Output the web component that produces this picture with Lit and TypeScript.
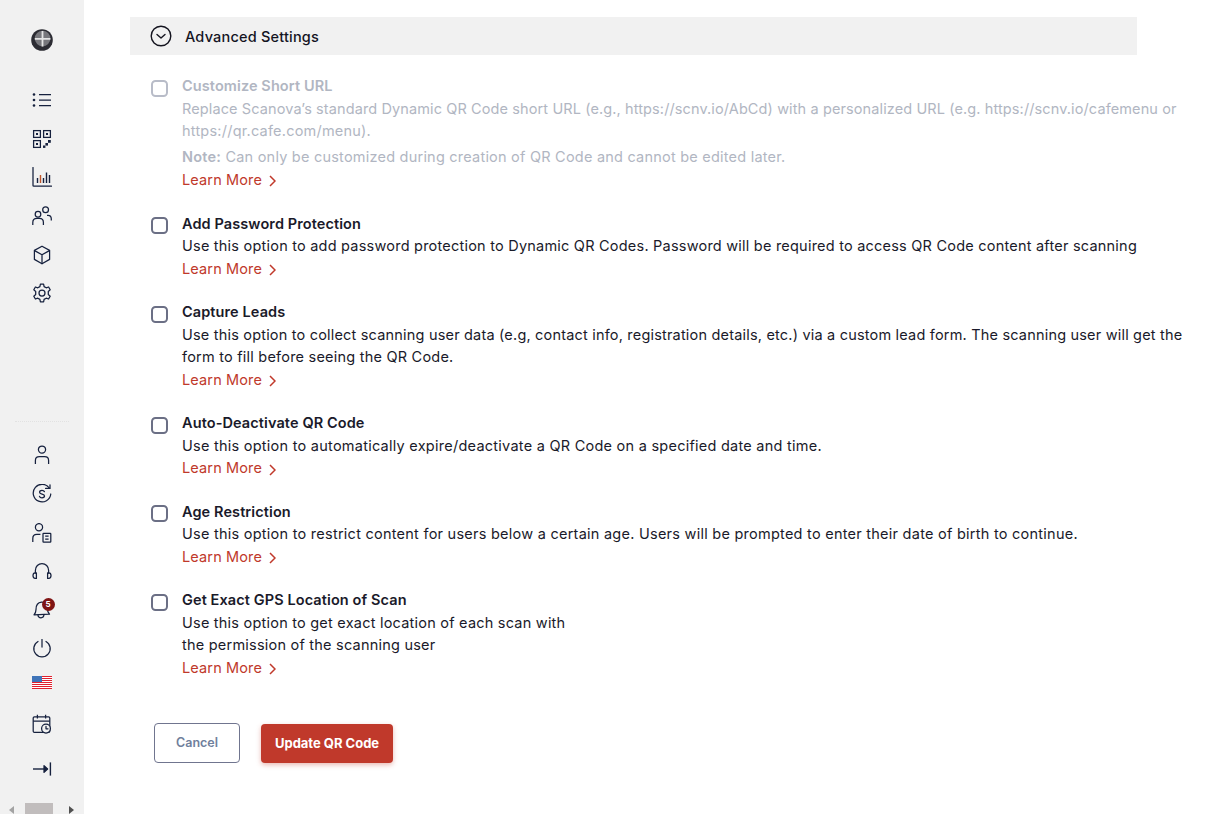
import { LitElement, html, css, svg } from "lit";
import { customElement } from "lit/decorators.js";

const ic = (body: unknown) => html`<svg class="ic" viewBox="0 0 20 20" fill="none" stroke="#16213e" stroke-width="1.25" stroke-linecap="round" stroke-linejoin="round">${body}</svg>`;

const topIcons = [
  svg`<path d="M7 4.5H19M7 10H19M7 15.5H19" stroke-linecap="butt"/><circle cx="2" cy="4.5" r="1.3" fill="#16213e" stroke="none"/><circle cx="2" cy="10" r="1.3" fill="#16213e" stroke="none"/><circle cx="2" cy="15.5" r="1.3" fill="#16213e" stroke="none"/>`,
  svg`<g stroke-linecap="butt" stroke-linejoin="miter"><rect x="1.6" y="1.6" width="6.8" height="6.8"/><rect x="11.6" y="1.6" width="6.8" height="6.8"/><rect x="1.6" y="11.6" width="6.8" height="6.8"/></g><g fill="#16213e" stroke="none"><rect x="4" y="4" width="2" height="2"/><rect x="14" y="4" width="2" height="2"/><rect x="4" y="14" width="2" height="2"/><rect x="11" y="16.5" width="2.4" height="2.4"/><rect x="13.4" y="14" width="2.6" height="2.6"/><rect x="16" y="11" width="2.8" height="2.8"/></g>`,
  svg`<path d="M1 0.5V18.5C1 19 1.3 19.2 1.8 19.2H19.5"/><path d="M5.5 16V11M11.5 16V11M14.5 16V5.5M17.5 16V8" stroke-linecap="butt" stroke-width="1.4"/><path d="M8.5 16V8" stroke="#c0562b" stroke-linecap="butt" stroke-width="1.4"/>`,
  svg`<circle cx="6" cy="8.2" r="2.8"/><path d="M0.8 19V16.4C0.8 13.9 2.6 12.4 5 12.4H7.4C9.8 12.4 11.4 13.9 11.4 16.4V19" stroke-linecap="butt"/><circle cx="13.6" cy="3.8" r="2.9"/><path d="M15 9.4H16C18 9.4 19.3 11 19.3 13V14.6" stroke-linecap="butt"/>`,
  svg`<path d="M10 1.2L17.6 5.4V14.4L10 18.8L2.4 14.4V5.4Z"/><path d="M2.6 5.6L10 9.8L17.4 5.6M10 9.8V18.6"/>`,
  svg`<path d="M8.4 1.2H11.6L12.1 3.6L14.2 4.8L16.6 4L18.2 6.8L16.3 8.4V11.6L18.2 13.2L16.6 16L14.2 15.2L12.1 16.4L11.6 18.8H8.4L7.9 16.4L5.8 15.2L3.4 16L1.8 13.2L3.7 11.6V8.4L1.8 6.8L3.4 4L5.8 4.8L7.9 3.6Z"/><circle cx="10" cy="10" r="3"/>`,
];

const botIcons = [
  svg`<circle cx="10" cy="4.6" r="3.6"/><path d="M3.4 19V15.4C3.4 13 5 11.6 7.4 11.6H12.6C15 11.6 16.6 13 16.6 15.4V19" stroke-linecap="butt"/>`,
  svg`<path d="M17.5 4.4A8.8 8.8 0 1 0 18.8 10"/><path d="M13.6 4.4H18V0.8"/><path d="M12.4 7.6C12 6.8 11 6.4 10 6.4C8.6 6.4 7.6 7.1 7.6 8.2C7.6 10.6 12.5 9.6 12.5 12C12.5 13.1 11.4 13.8 10 13.8C8.8 13.8 7.8 13.3 7.5 12.4" stroke-width="1.3"/>`,
  svg`<circle cx="7" cy="4.2" r="3.6"/><path d="M0.8 19V15.4C0.8 13 2.4 11.4 4.8 11.4H8.4" stroke-linecap="butt"/><rect x="11" y="10.4" width="7.8" height="8.6" rx=".6"/><path d="M13.2 13.2H16.6M13.2 16.2H16.6" stroke-linecap="butt"/>`,
  svg`<path d="M3.4 11.2V8.2A6.6 6.6 0 0 1 16.6 8.2V11.2"/><path d="M4.4 10.8H3.2C2 10.8 1 12 1 13.6C1 15.2 2 16.4 3.2 16.4H4.4Z"/><path d="M15.6 10.8H16.8C18 10.8 19 12 19 13.6C19 15.2 18 16.4 16.8 16.4H15.6Z"/>`,
  svg`<path d="M2 14.8C3.6 13 4 11.5 4 9.5C4 5.5 6 2.5 9.5 2.2C13 2 14.5 5 15 8C15.3 10.5 15.8 12.5 17.5 14.2Z"/><path d="M6 15.2C6.2 17 7.4 17.8 9 17.8C10.6 17.8 11.8 17 12 14.8"/>`,
  svg`<path d="M10 0.6V8"/><path d="M6 2.5A8.2 8.2 0 1 0 14 2.5"/>`,
];

const flag = svg`<svg class="flag" viewBox="0 0 20 13" shape-rendering="crispEdges"><rect width="20" height="13" fill="#fff"/><g fill="#e0202f"><rect width="20" height="1"/><rect y="2" width="20" height="1"/><rect y="4" width="20" height="1"/><rect y="6" width="20" height="1"/><rect y="8" width="20" height="1"/><rect y="10" width="20" height="1"/><rect y="12" width="20" height="1"/></g><rect width="10" height="6" fill="#3f74b8"/></svg>`;

const cal = svg`<rect x="1.2" y="2.8" width="16.6" height="15.6" rx="1.2" stroke-linecap="butt"/><path d="M1.2 7H17.8M5.4 0.8V4.4M13.6 0.8V4.4" stroke-linecap="butt"/><circle cx="14" cy="14.6" r="4.4" fill="#f1f1f1"/><path d="M14 12.4V14.8H16"/>`;
const collapse = svg`<path d="M1 10H15.4" stroke-width="1.4" stroke-linecap="butt"/><path d="M12 6.6L15.6 10L12 13.4Z" fill="#16213e"/><path d="M18.4 3.4V16.6" stroke-width="1.4" stroke-linecap="butt"/>`;

interface Line { t: string; ls?: number; }
interface Opt { title: string; lines: Line[]; note?: string; disabled?: boolean; }
const opts: Opt[] = [
  { title: "Customize Short URL", disabled: true, lines: [{ t: "Replace Scanova’s standard Dynamic QR Code short URL (e.g., https://scnv.io/AbCd) with a personalized URL (e.g. https://scnv.io/cafemenu or", ls: 0.11 }, { t: "https://qr.cafe.com/menu)." }], note: "Can only be customized during creation of QR Code and cannot be edited later." },
  { title: "Add Password Protection", lines: [{ t: "Use this option to add password protection to Dynamic QR Codes. Password will be required to access QR Code content after scanning" }] },
  { title: "Capture Leads", lines: [{ t: "Use this option to collect scanning user data (e.g, contact info, registration details, etc.) via a custom lead form. The scanning user will get the", ls: 0.19 }, { t: "form to fill before seeing the QR Code." }] },
  { title: "Auto-Deactivate QR Code", lines: [{ t: "Use this option to automatically expire/deactivate a QR Code on a specified date and time.", ls: 0.25 }] },
  { title: "Age Restriction", lines: [{ t: "Use this option to restrict content for users below a certain age. Users will be prompted to enter their date of birth to continue.", ls: 0.25 }] },
  { title: "Get Exact GPS Location of Scan", lines: [{ t: "Use this option to get exact location of each scan with" }, { t: "the permission of the scanning user" }] },
];

@customElement("app-root")
export class AppRoot extends LitElement {
  static styles = css`
    :host { display: block; height: 814px; overflow: hidden; background: #fff; font-family: Inter, "Noto Sans", sans-serif; font-size: 14.5px; letter-spacing: .22px; color: #1a1a2a; }
    .page { display: flex; height: 814px; }
    .side { width: 84px; flex: none; background: #f1f1f1; display: flex; flex-direction: column; align-items: center; }
    .logo { width: 22px; height: 22px; margin-top: 29px; }
    .group { display: flex; flex-direction: column; align-items: center; }
    .top { margin-top: 39px; gap: 18.7px; }
    .ic { width: 20px; height: 20px; display: block; }
    .rule { width: 54px; border-top: 1px dotted #e2e2e2; margin-top: 118px; }
    .bot { margin-top: 23px; gap: 18.7px; }
    .bellwrap { position: relative; }
    .badge { position: absolute; top: -2px; right: -2.5px; width: 13px; height: 13px; border-radius: 50%; background: #7f1414; color: #fff; font-size: 8px; font-weight: 700; line-height: 13px; text-align: center; letter-spacing: 0; }
    .flag { width: 20px; height: 13px; display: block; margin-top: -2px; margin-bottom: 10px; }
    .cal { margin-top: -3px; }
    .col { margin-top: 6px; }
    .sb { margin-top: auto; width: 84px; height: 11px; position: relative; }
    .thumb { position: absolute; left: 25px; width: 28px; top: 0; bottom: 0; background: #c1bdbd; }
    .arrow { position: absolute; top: 3px; width: 0; height: 0; border-top: 4px solid transparent; border-bottom: 4px solid transparent; }
    .al { left: 9px; border-right: 5px solid #a3a3a3; }
    .ar { left: 69px; border-left: 5px solid #505050; }
    .main { flex: 1; min-width: 0; padding: 17px 0 0 46px; }
    .head { width: 1007px; height: 38px; background: #f1f1f1; display: flex; align-items: center; gap: 13px; padding-left: 20px; box-sizing: border-box; font-weight: 500; letter-spacing: .2px; color: #14141f; }
    .chev { width: 22px; height: 22px; display: block; }
    .opts { margin: 20.4px 0 0 21px; }
    .opt { display: flex; gap: 14px; margin-bottom: 21.1px; line-height: 22.5px; white-space: nowrap; }
    .cb { width: 17px; height: 17px; box-sizing: border-box; border: 2px solid #6b6f85; border-radius: 4.5px; margin-top: 4.6px; flex: none; }
    .title { font-weight: 600; letter-spacing: .1px; }
    .note { margin-top: 3.6px; }
    .note b { font-weight: 600; }
    .dis .cb { border-color: #b8bcc8; }
    .dis .txt { color: #b1b6c2; }
    .link { color: #c0392b; display: flex; align-items: center; gap: 7px; letter-spacing: .13px; }
    .link svg { width: 7px; height: 12px; display: block; margin-top: 2px; }
    .btns { display: flex; align-items: flex-start; gap: 21px; margin: 43.3px 0 0 24px; }
    .btn { box-sizing: border-box; height: 39px; border-radius: 4px; font-size: 13px; font-weight: 600; display: flex; align-items: center; justify-content: center; letter-spacing: 0; }
    .cancel { width: 86px; height: 40px; border: 1px solid #70758f; color: #70809c; background: #fff; font-size: 12.5px; }
    .save { width: 132px; margin-top: 1px; background: #c0392b; color: #fff; font-weight: 700; box-shadow: 0 2px 5px rgba(192,57,43,.35); }
  `;

  render() {
    return html`<div class="page">
      <aside class="side">
        <svg class="logo" viewBox="0 0 22 22"><circle cx="11" cy="11" r="10.8" fill="#2c2c33"/><circle cx="11.6" cy="9.6" r="7.8" fill="#77777c"/><path d="M11.5 2V17.5M3.8 9.8H19.4" stroke="#e4e4e4" stroke-width="1.8"/></svg>
        <div class="group top">${topIcons.map(ic)}</div>
        <div class="rule"></div>
        <div class="group bot">
          ${botIcons.map((b, i) => i === 4 ? html`<div class="bellwrap">${ic(b)}<span class="badge">5</span></div>` : ic(b))}
          ${flag}
          <div class="cal">${ic(cal)}</div>
          <div class="col">${ic(collapse)}</div>
        </div>
        <div class="sb"><i class="arrow al"></i><i class="thumb"></i><i class="arrow ar"></i></div>
      </aside>
      <main class="main">
        <div class="head">
          <svg class="chev" viewBox="0 0 22 22" fill="none" stroke="#14141f" stroke-width="1.4"><circle cx="11" cy="11" r="9.8"/><path d="M7 9.5L11 13L15 9.5" stroke-linecap="round" stroke-linejoin="round"/></svg>
          <span>Advanced Settings</span>
        </div>
        <div class="opts">
          ${opts.map(o => html`<div class="opt ${o.disabled ? "dis" : ""}">
            <div class="cb"></div>
            <div>
              <div class="txt title">${o.title}</div>
              ${o.lines.map(l => html`<div class="txt" style=${l.ls ? `letter-spacing:${l.ls}px` : ""}>${l.t}</div>`)}
              ${o.note ? html`<div class="txt note"><b>Note:</b> ${o.note}</div>` : ""}
              <div class="link">Learn More <svg viewBox="0 0 7 12" fill="none" stroke="#c0392b" stroke-width="1.5"><path d="M1 1L6 6L1 11"/></svg></div>
            </div>
          </div>`)}
        </div>
        <div class="btns">
          <div class="btn cancel">Cancel</div>
          <div class="btn save">Update QR Code</div>
        </div>
      </main>
    </div>`;
  }
}
